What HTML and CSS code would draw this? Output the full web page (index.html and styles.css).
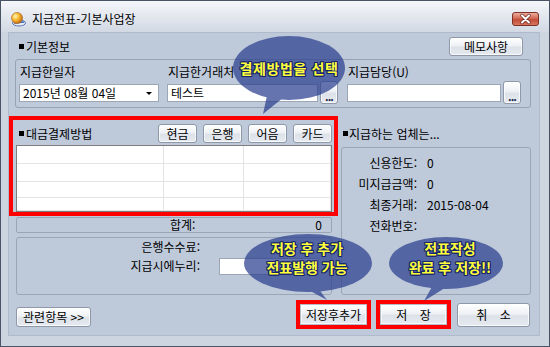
FILE: index.html
```html
<!DOCTYPE html>
<html lang="ko">

<head>
    <meta charset="UTF-8">
    <title>지급전표-기본사업장</title>
    <link rel="stylesheet" href="styles.css">
</head>

<body>
    <div class="window">
        <div class="titlebar">
            <svg class="app-icon" width="16" height="16" viewBox="0 0 16 16">
                <defs>
                    <radialGradient id="ball" cx="0.35" cy="0.35" r="0.7">
                        <stop offset="0" stop-color="#fff6b0"/>
                        <stop offset="0.5" stop-color="#f6b530"/>
                        <stop offset="1" stop-color="#c26a10"/>
                    </radialGradient>
                </defs>
                <ellipse cx="9" cy="12" rx="6.5" ry="3" fill="#e8eef8" stroke="#5b78b0" stroke-width="1"/>
                <path d="M4 12 L14 11" stroke="#3d66b8" stroke-width="1.5"/>
                <circle cx="7" cy="7" r="5.5" fill="url(#ball)" stroke="#a55a10" stroke-width="0.6"/>
            </svg>
            <span class="title">지급전표-기본사업장</span>
            <div class="close">
                <svg width="27" height="14" viewBox="0 0 27 14">
                    <defs>
                        <linearGradient id="red" x1="0" y1="0" x2="0" y2="1">
                            <stop offset="0" stop-color="#eeb2a4"/>
                            <stop offset="0.45" stop-color="#d26a56"/>
                            <stop offset="0.55" stop-color="#c24c38"/>
                            <stop offset="1" stop-color="#dc7a62"/>
                        </linearGradient>
                    </defs>
                    <rect x="0.5" y="0.5" width="26" height="13" rx="2.5" fill="url(#red)" stroke="#7e3226"/>
                    <path d="M10 3.5 L17 10.5 M17 3.5 L10 10.5" stroke="#6c2a22" stroke-width="3.4" stroke-linecap="round"/>
                    <path d="M10 3.5 L17 10.5 M17 3.5 L10 10.5" stroke="#ffffff" stroke-width="2" stroke-linecap="round"/>
                </svg>
            </div>
        </div>

        <div class="panel">
            <div class="top-row">
                <span class="sq"></span><span>기본정보</span>
                <button class="btn memo-btn">메모사항</button>
            </div>

            <div class="basic-box">
                <div class="field col-date">
                    <div class="label">지급한일자</div>
                    <div class="field-row">
                        <div class="input combo">2015년 08월 04일<span class="arrow"></span></div>
                    </div>
                </div>
                <div class="field col-vendor">
                    <div class="label">지급한거래처</div>
                    <div class="field-row">
                        <div class="input grow">테스트</div>
                        <button class="btn dots">...</button>
                    </div>
                </div>
                <div class="field col-staff">
                    <div class="label">지급담당(U)</div>
                    <div class="field-row">
                        <div class="input grow"></div>
                        <button class="btn dots">...</button>
                    </div>
                </div>
            </div>

            <div class="main">
                <div class="left-col">
                    <div class="pay-box">
                        <div class="pay-head">
                            <span class="sq"></span><span>대금결제방법</span>
                            <div class="pay-buttons">
                                <button class="btn pay-btn">현금</button>
                                <button class="btn pay-btn">은행</button>
                                <button class="btn pay-btn">어음</button>
                                <button class="btn pay-btn">카드</button>
                            </div>
                        </div>
                        <div class="pay-grid">
                            <div class="cell"></div><div class="cell"></div><div class="cell"></div>
                            <div class="cell"></div><div class="cell"></div><div class="cell"></div>
                            <div class="cell"></div><div class="cell"></div><div class="cell"></div>
                            <div class="cell"></div><div class="cell"></div><div class="cell"></div>
                        </div>
                    </div>
                    <div class="sum-row">
                        <span class="sum-label">합계:</span>
                        <span class="sum-value">0</span>
                    </div>
                    <div class="fee-box">
                        <div class="fee-label">은행수수료:</div>
                        <div></div>
                        <div class="fee-label">지급시에누리:</div>
                        <div class="input fee-input"></div>
                    </div>
                </div>

                <div class="right-col">
                    <div class="vendor-head">
                        <span class="sq"></span><span>지급하는 업체는...</span>
                    </div>
                    <div class="vendor-box">
                        <div class="v-label">신용한도:</div><div>0</div>
                        <div class="v-label">미지급금액:</div><div>0</div>
                        <div class="v-label">최종거래:</div><div>2015-08-04</div>
                        <div class="v-label">전화번호:</div><div></div>
                    </div>
                </div>
            </div>

            <div class="footer">
                <button class="btn related-btn">관련항목 &gt;&gt;</button>
                <div class="mark mark-first"><button class="btn fill-btn">저장후추가</button></div>
                <div class="mark"><button class="btn fill-btn wide">저 장</button></div>
                <button class="btn cancel-btn wide">취 소</button>
            </div>
        </div>

        <div class="bubble bubble-pay">
            <svg width="124" height="86" viewBox="0 0 124 86">
                <g class="bubble-shape">
                    <ellipse cx="62" cy="37" rx="56" ry="32"/>
                    <polygon points="41,60 36,83 62,62"/>
                </g>
            </svg>
            <div class="bubble-text">결제방법을 선택</div>
        </div>

        <div class="bubble bubble-add">
            <svg width="136" height="72" viewBox="0 0 136 72">
                <g class="bubble-shape">
                    <ellipse cx="67" cy="32" rx="64" ry="29"/>
                    <polygon points="60,55 86,69 76,56"/>
                </g>
            </svg>
            <div class="bubble-text">저장 후 추가<br>전표발행 가능</div>
        </div>

        <div class="bubble bubble-save">
            <svg width="124" height="70" viewBox="0 0 124 70">
                <g class="bubble-shape">
                    <ellipse cx="61" cy="30" rx="57" ry="26"/>
                    <polygon points="48,52 39,68 63,53"/>
                </g>
            </svg>
            <div class="bubble-text">전표작성<br>완료 후 저장!!</div>
        </div>
    </div>
</body>

</html>
```

FILE: styles.css
```css
* {
    box-sizing: border-box;
}

body {
    margin: 0;
    background: #cdd5e1;
    font-family: "Noto Sans CJK KR", "Noto Sans", sans-serif;
    font-size: 12px;
    color: #000;
}

.window {
    position: relative;
    width: 550px;
    height: 347px;
    border: 1px solid #4a5365;
    background: #cdd5e1;
}

.titlebar {
    height: 31px;
    padding: 5px 10px 0 9px;
    display: flex;
    align-items: center;
    background: linear-gradient(#f4f6f9, #d2d9e4);
}

.app-icon {
    margin-right: 6px;
}

.title {
    line-height: 14px;
}

.close {
    margin-left: auto;
    height: 14px;
}

.close svg {
    display: block;
}

.panel {
    margin-left: 7px;
    width: 532px;
    height: 304px;
    background: #bec9da;
    box-shadow: inset 0 0 0 1px #b0bacb;
    overflow: hidden;
}

.sq {
    display: inline-block;
    width: 5px;
    height: 5px;
    background: #000;
    margin-right: 2px;
}

.btn {
    font-family: inherit;
    font-size: 12px;
    color: #000;
    padding: 0;
    border: 1px solid #8e98a8;
    border-radius: 3px;
    background: linear-gradient(#ffffff, #eef1f5 45%, #dde2e9 55%, #e6eaf0);
    box-shadow: inset 0 0 0 1px rgba(255, 255, 255, 0.7);
    line-height: 14px;
}

.top-row {
    margin-top: 5px;
    height: 19px;
    padding: 0 17px 0 11px;
    display: flex;
    align-items: center;
    line-height: 14px;
}

.memo-btn {
    margin-left: auto;
    width: 74px;
    height: 19px;
}

.basic-box {
    margin: 3px 9px 0 7px;
    height: 49px;
    border: 1px solid #97a2b3;
    border-radius: 3px;
    padding: 5px 9px 0 3px;
    display: flex;
}

.label {
    height: 14px;
    line-height: 14px;
    padding-left: 1px;
}

.field-row {
    margin-top: 2px;
    height: 23px;
    display: flex;
    align-items: center;
}

.col-date {
    width: 141px;
}

.col-vendor {
    width: 171px;
    margin-left: 7px;
}

.col-staff {
    width: 174px;
    margin-left: 9px;
}

.input {
    height: 18px;
    background: #fff;
    border: 1px solid #9ba6b6;
    padding-left: 3px;
    line-height: 16px;
}

.combo {
    position: relative;
    width: 140px;
}

.arrow {
    position: absolute;
    right: 6px;
    top: 7px;
    border-left: 3px solid transparent;
    border-right: 3px solid transparent;
    border-top: 3px solid #000;
}

.grow {
    flex: 1;
}

.dots {
    width: 18px;
    height: 23px;
    margin-left: 2px;
    font-weight: bold;
    font-size: 11px;
    color: #1d2b4d;
    padding-top: 6px;
    letter-spacing: -1px;
}

.main {
    margin-top: 8px;
    display: flex;
}

.left-col {
    margin-left: 1px;
    width: 329px;
}

.pay-box {
    height: 100px;
    border: 4px solid #ff0000;
}

.pay-head {
    margin-top: 4px;
    height: 19px;
    padding: 0 2px 0 6px;
    display: flex;
    align-items: center;
    line-height: 14px;
}

.pay-buttons {
    margin-left: auto;
    display: flex;
    gap: 6px;
}

.pay-btn {
    width: 39px;
    height: 19px;
}

.pay-grid {
    margin: 2px 2px 0 3px;
    height: 67px;
    background: #fff;
    border: 1px solid #7e7e7e;
    display: grid;
    grid-template-columns: 147px 80px 1fr;
    grid-template-rows: 18px 18px 16px 1fr;
}

.cell {
    border-right: 1px solid #e4e4e4;
    border-bottom: 1px solid #e4e4e4;
}

.sum-row {
    margin: 1px 6px 0 7px;
    height: 16px;
    border: 1px solid #9aa5b5;
    border-radius: 2px;
    display: flex;
    align-items: center;
    line-height: 14px;
    padding: 0 9px 0 153px;
}

.sum-value {
    margin-left: auto;
}

.fee-box {
    margin: 4px 6px 0 7px;
    height: 58px;
    border: 1px solid #9aa5b5;
    border-radius: 3px;
    padding-top: 1px;
    display: grid;
    grid-template-columns: 183px 100px;
    grid-template-rows: 16px 17px;
    column-gap: 19px;
    row-gap: 3px;
}

.fee-label {
    text-align: right;
    line-height: 16px;
}

.fee-input {
    height: 17px;
}

.right-col {
    margin-left: 3px;
    width: 190px;
}

.vendor-head {
    margin-top: 8px;
    height: 19px;
    padding-left: 2px;
    display: flex;
    align-items: center;
    line-height: 14px;
}

.vendor-head .sq {
    margin-right: 1px;
}

.vendor-box {
    margin-top: 4px;
    height: 148px;
    border: 1px solid #9aa5b5;
    border-radius: 3px;
    padding-top: 4px;
    display: grid;
    grid-template-columns: 75px 1fr;
    grid-auto-rows: 21px;
    column-gap: 10px;
    line-height: 21px;
}

.v-label {
    text-align: right;
}

.footer {
    margin-top: 5px;
    display: flex;
    align-items: flex-start;
}

.related-btn {
    margin: 7px 0 0 8px;
    width: 75px;
    height: 20px;
}

.mark {
    width: 75px;
    height: 29px;
    margin-left: 5px;
    border: 4px solid #ff0000;
}

.mark-first {
    margin-left: auto;
}

.fill-btn {
    display: block;
    width: 100%;
    height: 100%;
    border-radius: 0;
    border-color: #b4bcc8;
}

.cancel-btn {
    margin: 3px 10px 0 6px;
    width: 73px;
    height: 24px;
}

.wide {
    word-spacing: 9px;
}

.bubble {
    position: absolute;
}

.bubble svg {
    display: block;
}

.bubble-shape {
    fill: #2b3f8f;
    opacity: 0.72;
}

.bubble-text {
    position: absolute;
    left: 0;
    right: 0;
    text-align: center;
    font-size: 14px;
    font-weight: bold;
    line-height: 19px;
    color: #ffff3c;
    text-shadow: 1px 0 #17246a, -1px 0 #17246a, 0 1px #17246a, 0 -1px #17246a,
        1px 1px #17246a, -1px -1px #17246a, 1px -1px #17246a, -1px 1px #17246a;
}

.bubble-pay {
    left: 226px;
    top: 30px;
}

.bubble-pay .bubble-text {
    top: 28px;
    letter-spacing: 0.6px;
}

.bubble-add {
    left: 240px;
    top: 230px;
}

.bubble-add .bubble-text {
    top: 8px;
    width: 132px;
}

.bubble-save {
    left: 384px;
    top: 232px;
}

.bubble-save .bubble-text {
    top: 6px;
    width: 130px;
}
```
